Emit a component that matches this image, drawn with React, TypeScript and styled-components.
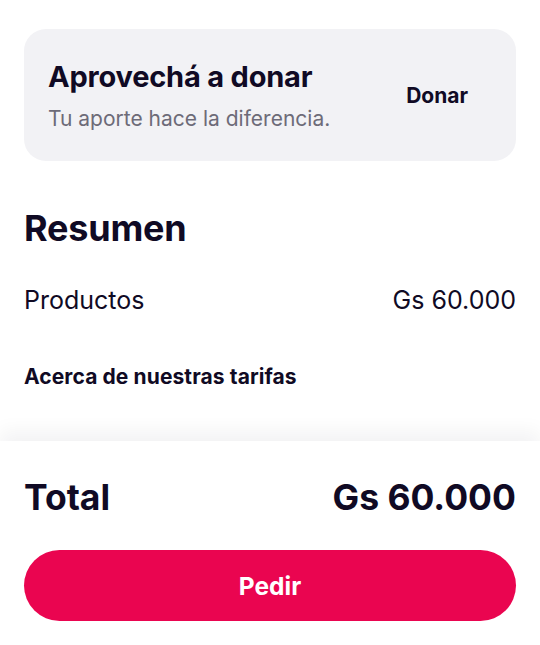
import React from "react";
import styled, { createGlobalStyle } from "styled-components";

const Global = createGlobalStyle`
  html, body { margin: 0; padding: 0; background: #ffffff; }
  body { font-family: Inter, "Noto Sans", sans-serif; color: #100a24; -webkit-font-smoothing: antialiased; }
  * { box-sizing: border-box; }
`;

const Page = styled.div`
  width: 540px;
  height: 645px;
  display: flex;
  flex-direction: column;
  overflow: hidden;
`;

const Content = styled.main`
  flex: 1;
  padding: 29px 24px 0;
  display: flex;
  flex-direction: column;
`;

const DonateCard = styled.section`
  height: 132px;
  background: #f2f2f5;
  border-radius: 22px;
  padding: 0 48px 0 24px;
  display: flex;
  align-items: center;
  justify-content: space-between;
`;

const CardText = styled.div`
  display: flex;
  flex-direction: column;
  gap: 13px;
  margin-top: 2px;
`;

const CardTitle = styled.h2`
  margin: 0;
  font-size: 29px;
  line-height: 32px;
  font-weight: 700;
  letter-spacing: -0.2px;
`;

const CardSubtitle = styled.p`
  margin: 0;
  font-size: 21px;
  line-height: 26px;
  font-weight: 400;
  color: #6d6b78;
`;

const DonateButton = styled.button`
  border: none;
  background: transparent;
  padding: 0;
  font-family: inherit;
  font-size: 21px;
  font-weight: 700;
  color: #100a24;
  cursor: pointer;
`;

const SectionTitle = styled.h1`
  margin: 46px 0 0;
  font-size: 36px;
  line-height: 42px;
  font-weight: 700;
  letter-spacing: -0.2px;
`;

const Row = styled.div<{ $strong?: boolean }>`
  display: flex;
  justify-content: space-between;
  align-items: center;
  font-size: ${(p) => (p.$strong ? "35.5px" : "25px")};
  font-weight: ${(p) => (p.$strong ? 700 : 400)};
  line-height: ${(p) => (p.$strong ? "40px" : "30px")};
`;

const SummaryRow = styled(Row)`
  margin-top: 36px;
`;

const FeesLink = styled.a`
  margin-top: 49px;
  font-size: 21px;
  line-height: 26px;
  font-weight: 700;
  color: #100a24;
  text-decoration: none;
  letter-spacing: 0.1px;
`;

const Footer = styled.footer`
  height: 204px;
  background: #ffffff;
  box-shadow: 0 -10px 18px rgba(16, 10, 36, 0.05);
  padding: 37px 24px 0;
  display: flex;
  flex-direction: column;
  position: relative;
`;

const OrderButton = styled.button`
  margin-top: 32px;
  height: 71px;
  width: 100%;
  border: none;
  border-radius: 36px;
  background: #ea0550;
  color: #ffffff;
  font-family: inherit;
  font-size: 24.5px;
  font-weight: 700;
  cursor: pointer;
`;

export default function App() {
  return (
    <Page>
      <Global />
      <Content>
        <DonateCard>
          <CardText>
            <CardTitle>Aprovechá a donar</CardTitle>
            <CardSubtitle>Tu aporte hace la diferencia.</CardSubtitle>
          </CardText>
          <DonateButton>Donar</DonateButton>
        </DonateCard>
        <SectionTitle>Resumen</SectionTitle>
        <SummaryRow>
          <span>Productos</span>
          <span>Gs 60.000</span>
        </SummaryRow>
        <FeesLink href="#">Acerca de nuestras tarifas</FeesLink>
      </Content>
      <Footer>
        <Row $strong>
          <span>Total</span>
          <span>Gs 60.000</span>
        </Row>
        <OrderButton>Pedir</OrderButton>
      </Footer>
    </Page>
  );
}
